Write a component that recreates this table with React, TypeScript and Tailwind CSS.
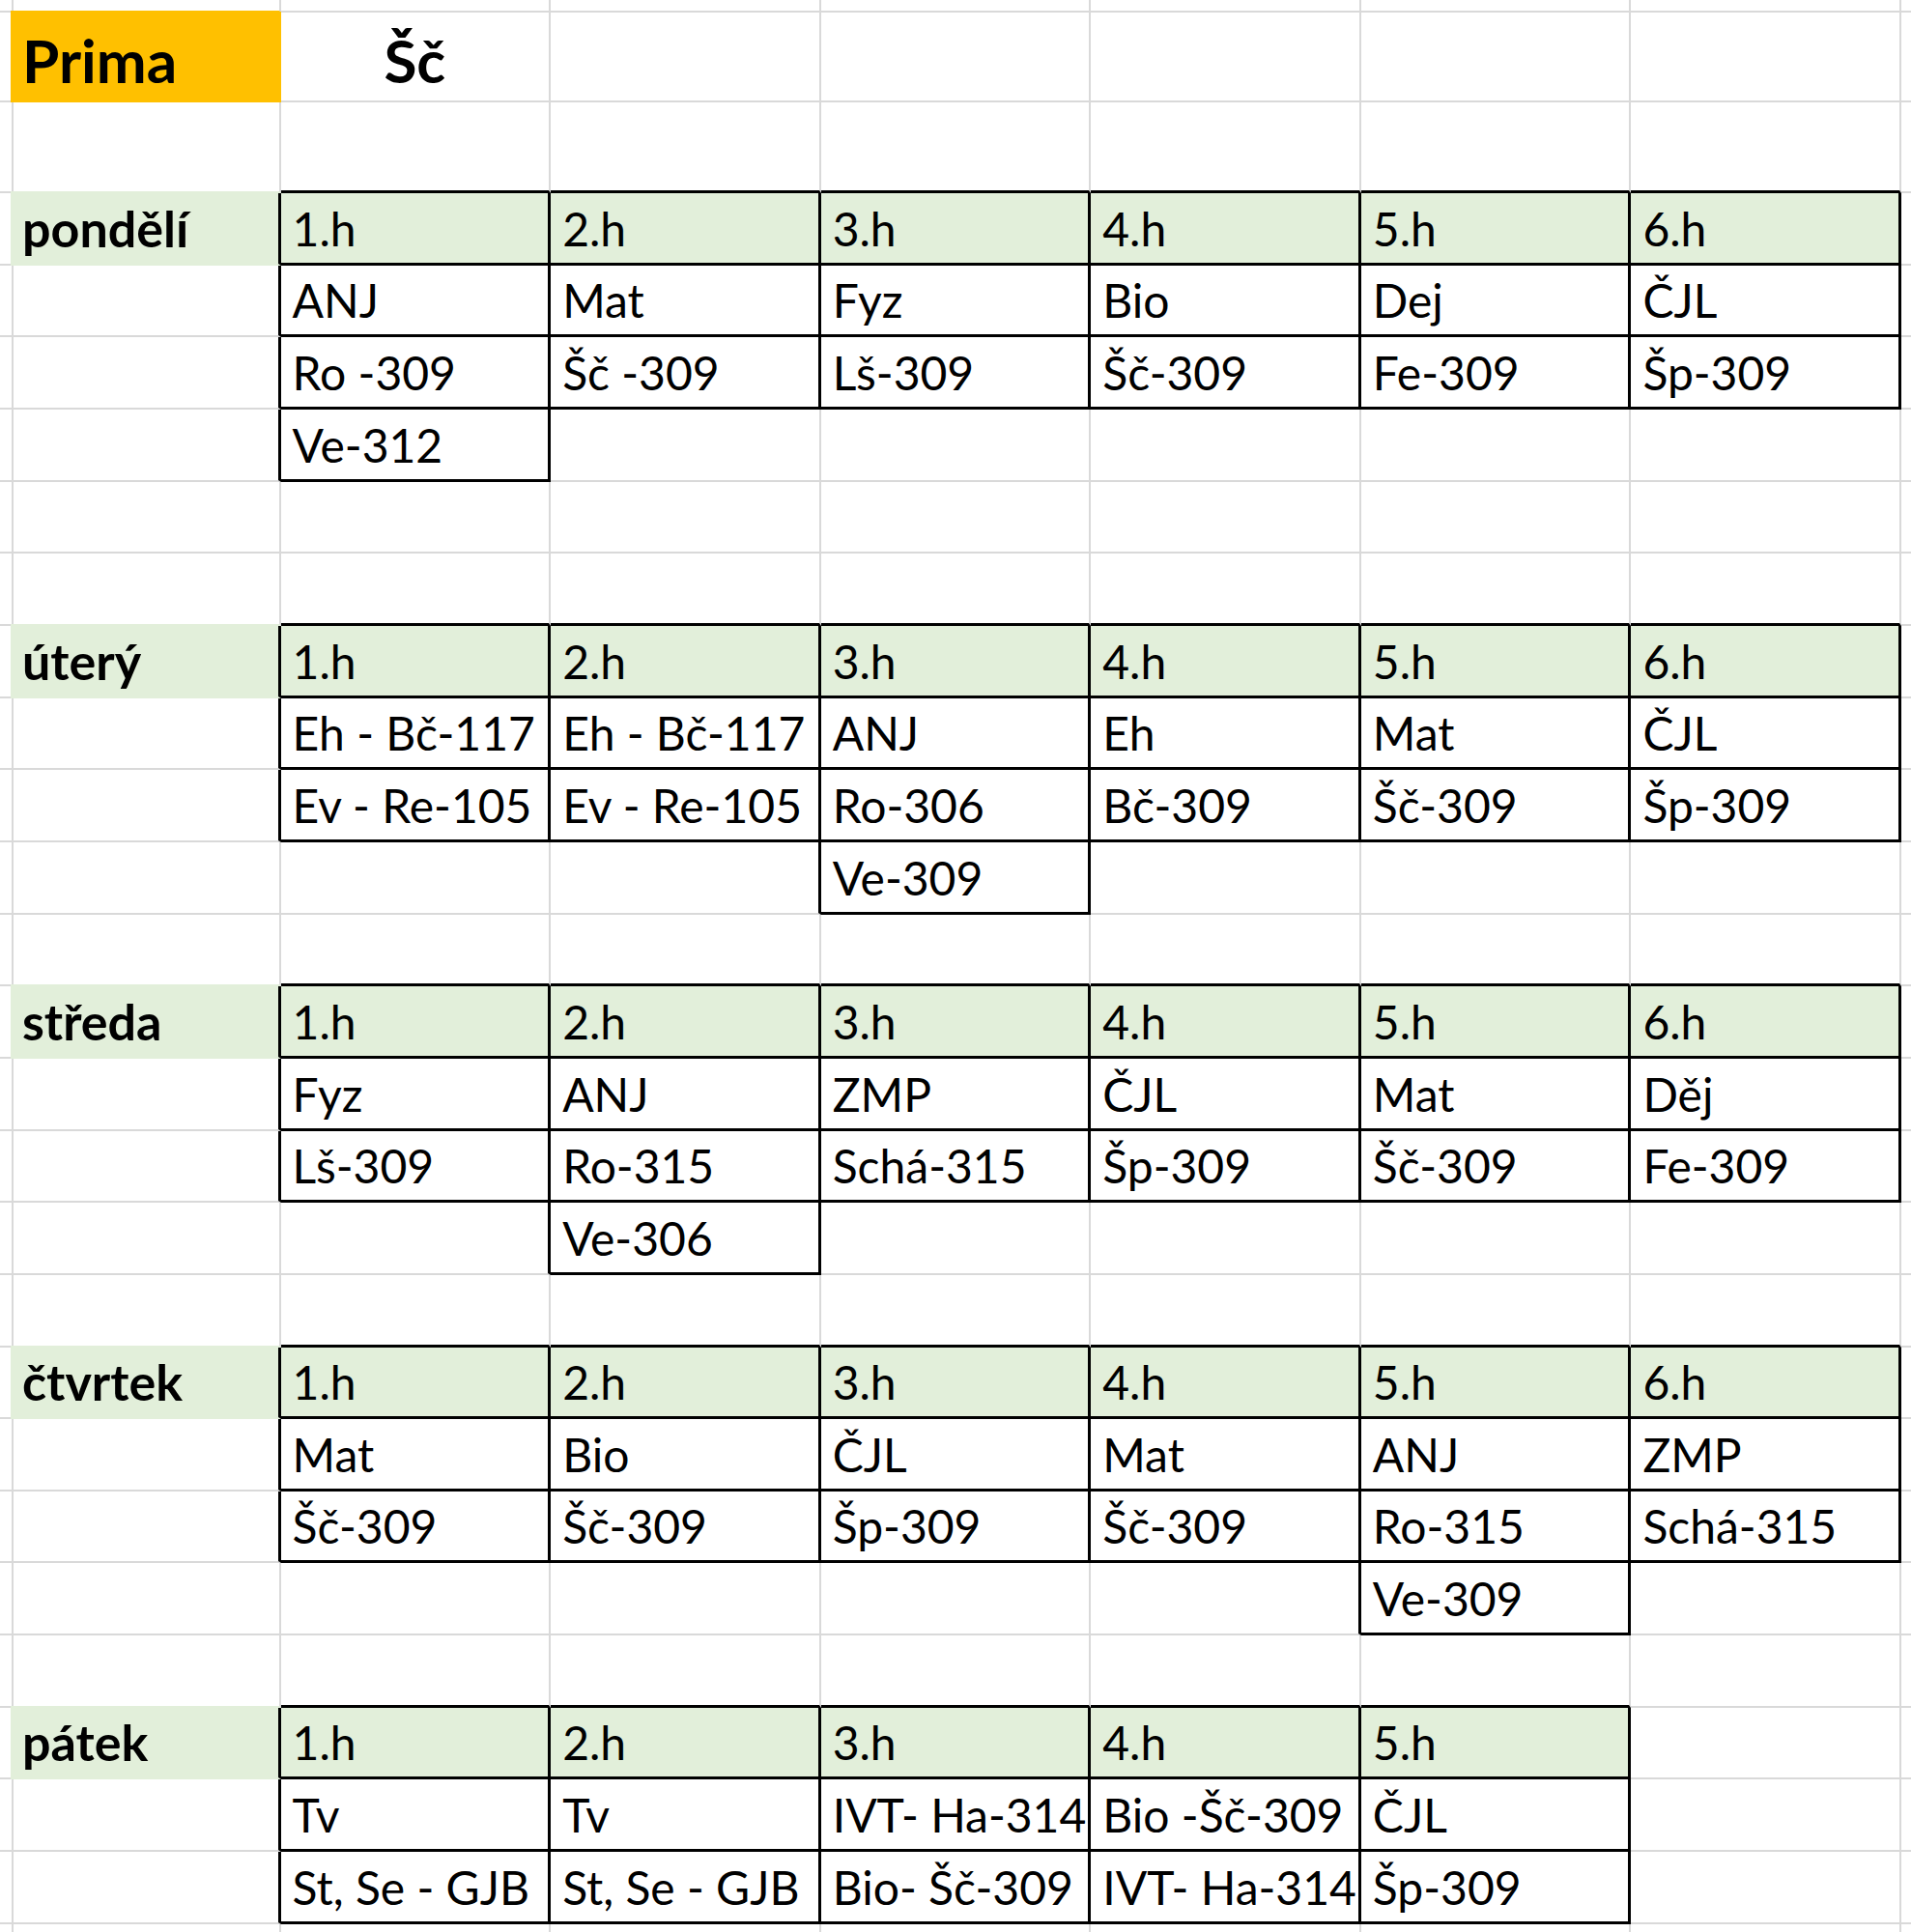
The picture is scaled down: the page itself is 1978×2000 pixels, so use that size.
import React from 'react';

type Fill = 'green' | 'yellow';
type Cell = {
  text?: string;
  fill?: Fill;
  table?: boolean;
  kind?: 'title' | 'day' | 'body';
  center?: boolean;
};

interface Day {
  name: string;
  row: number;
  subjects: string[];
  rooms: string[];
  extra: { col: number; text: string };
}

const days: Day[] = [
  {
    name: 'pondělí',
    row: 3,
    subjects: ['ANJ', 'Mat', 'Fyz', 'Bio', 'Dej', 'ČJL'],
    rooms: ['Ro -309', 'Šč -309', 'Lš-309', 'Šč-309', 'Fe-309', 'Šp-309'],
    extra: { col: 0, text: 'Ve-312' },
  },
  {
    name: 'úterý',
    row: 9,
    subjects: ['Eh - Bč-117', 'Eh - Bč-117', 'ANJ', 'Eh', 'Mat', 'ČJL'],
    rooms: ['Ev - Re-105', 'Ev - Re-105', 'Ro-306', 'Bč-309', 'Šč-309', 'Šp-309'],
    extra: { col: 2, text: 'Ve-309' },
  },
  {
    name: 'středa',
    row: 14,
    subjects: ['Fyz', 'ANJ', 'ZMP', 'ČJL', 'Mat', 'Děj'],
    rooms: ['Lš-309', 'Ro-315', 'Schá-315', 'Šp-309', 'Šč-309', 'Fe-309'],
    extra: { col: 1, text: 'Ve-306' },
  },
  {
    name: 'čtvrtek',
    row: 19,
    subjects: ['Mat', 'Bio', 'ČJL', 'Mat', 'ANJ', 'ZMP'],
    rooms: ['Šč-309', 'Šč-309', 'Šp-309', 'Šč-309', 'Ro-315', 'Schá-315'],
    extra: { col: 4, text: 'Ve-309' },
  },
  {
    name: 'pátek',
    row: 24,
    subjects: ['Tv', 'Tv', 'IVT- Ha-314', 'Bio -Šč-309', 'ČJL'],
    rooms: ['St, Se - GJB', 'St, Se - GJB', 'Bio- Šč-309', 'IVT- Ha-314', 'Šp-309'],
    extra: { col: -1, text: '' },
  },
];

const ROWS = 28;
const COLS = 9;

function buildSheet(): Cell[][] {
  const sheet: Cell[][] = Array.from({ length: ROWS }, () =>
    Array.from({ length: COLS }, () => ({} as Cell))
  );
  sheet[1][1] = { text: 'Prima', fill: 'yellow', kind: 'title' };
  sheet[1][2] = { text: 'Šč', kind: 'title', center: true };

  days.forEach((d) => {
    const r = d.row;
    sheet[r][1] = { text: d.name, fill: 'green', kind: 'day' };
    d.subjects.forEach((s, i) => {
      sheet[r][2 + i] = { text: `${i + 1}.h`, fill: 'green', table: true };
      sheet[r + 1][2 + i] = { text: s, table: true };
      sheet[r + 2][2 + i] = { text: d.rooms[i], table: true };
    });
    if (d.extra.col >= 0) {
      sheet[r + 3][2 + d.extra.col] = { text: d.extra.text, table: true };
    }
  });
  return sheet;
}

type Edge = 'black' | Fill | 'grey';

// table borders win, then cell fill hides the gridline
function edge(a?: Cell, b?: Cell): Edge {
  if (a?.table || b?.table) return 'black';
  if (a?.fill) return a.fill;
  if (b?.fill) return b.fill;
  return 'grey';
}

const rightClass: Record<Edge, string> = {
  black: 'border-r-[3px] border-r-black',
  green: 'border-r-2 border-r-[#e2efda]',
  yellow: 'border-r-2 border-r-[#ffc000]',
  grey: 'border-r-2 border-r-[#d9d9d9]',
};

const bottomClass: Record<Edge, string> = {
  black: 'border-b-[3px] border-b-black',
  green: 'border-b-2 border-b-[#e2efda]',
  yellow: 'border-b-2 border-b-[#ffc000]',
  grey: 'border-b-2 border-b-[#d9d9d9]',
};

const fillClass: Record<Fill, string> = {
  green: 'bg-[#e2efda]',
  yellow: 'bg-[#ffc000]',
};

const kindClass = {
  title: 'text-[62px] font-bold',
  day: 'text-[52px] font-bold',
  body: 'text-[48px]',
};

const App: React.FC = () => {
  const sheet = buildSheet();

  return (
    <div className="w-[1978px] h-[2000px] overflow-hidden bg-white text-black font-['Lato',sans-serif]">
      <div className="grid h-full grid-cols-[11px_repeat(7,279.57px)_1fr] grid-rows-[12px_93.5px_94.5px_repeat(24,74.66px)_1fr]">
        {sheet.map((row, r) =>
          row.map((cell, c) => {
            const right = edge(cell, row[c + 1]);
            const bottom = edge(cell, sheet[r + 1]?.[c]);
            return (
              <div
                key={`${r}-${c}`}
                className={`flex items-end whitespace-nowrap leading-none pb-[11px] ${
                  cell.center ? 'justify-center' : 'pl-[12px]'
                } ${rightClass[right]} ${bottomClass[bottom]} ${
                  cell.fill ? fillClass[cell.fill] : ''
                } ${kindClass[cell.kind ?? 'body']}`}
              >
                {cell.text}
              </div>
            );
          })
        )}
      </div>
    </div>
  );
};

export default App;
